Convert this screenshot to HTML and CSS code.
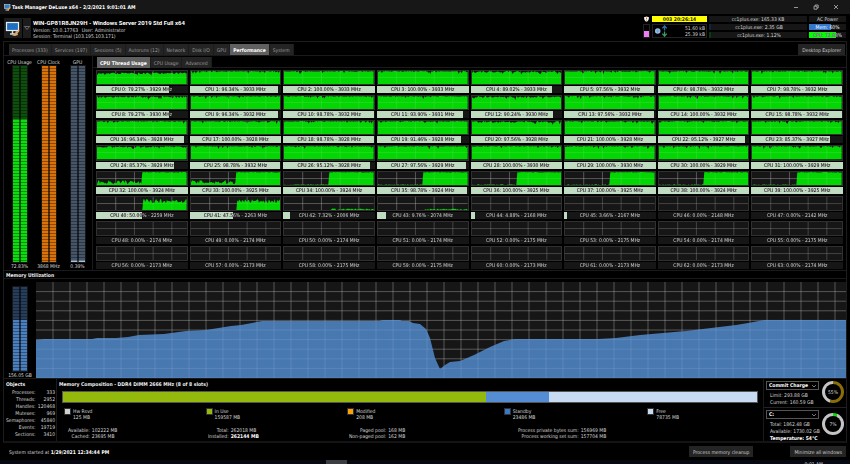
FILE: index.html
```
<!DOCTYPE html>
<html lang="en">
<head>
  <meta charset="UTF-8">
  <meta name="viewport" content="width=device-width, initial-scale=1.0">
  <title>Task Manager DeLuxe x64</title>
  <link rel="stylesheet" href="styles.css">
</head>
<body>
  <div class="titlebar">
    <svg class="app-icon" viewBox="0 0 14 14">
      <rect x="1" y="1" width="11" height="8" fill="#2f7fd0" stroke="#e8eef4"/>
      <path d="M3 12h7" stroke="#d8d8d8" stroke-width="2"/>
      <path d="M6 12L12 5l1 3-4 5z" fill="#e2a84c"/>
    </svg>
    <span class="app-title">Task Manager DeLuxe x64 - 2/2/2021 9:01:01 AM</span>
    <div class="window-buttons">
      <button aria-label="Minimize"><svg viewBox="0 0 6 6"><path d="M1 3.5h4"/></svg></button>
      <button aria-label="Restore"><svg viewBox="0 0 6 6"><path d="M1 2.2h3v3H1zM2.2 2V1h3v3H4.2"/></svg></button>
      <button aria-label="Close"><svg viewBox="0 0 6 6"><path d="M1 1l4 4M5 1L1 5"/></svg></button>
    </div>
  </div>

  <header class="header">
    <button class="computer" aria-label="Computer menu">
      <svg class="computer-icon" viewBox="0 0 18 18">
        <rect x="2.500" y="3" width="12" height="8" fill="#1f6fc0" stroke="#e6edf3" stroke-width="1.200"/>
        <path d="M6 14.500h5M8.500 11v3" stroke="#d5dde4" stroke-width="1.500"/>
        <path d="M8 16l3-2 1-3 1 1 2-2 .5 1.500-2 2.500.5 1.500-3 1z" fill="#e2a86a"/>
      </svg>
      <svg class="computer-arrow" viewBox="0 0 8 6"><path d="M1.500 1.500h5L4 4.500z" fill="none" stroke="#888" stroke-width=".7"/></svg>
    </button>
    <div class="host">
      <h1>WIN-GP81R8JN29H - Windows Server 2019 Std Full x64</h1>
      <p><span>Version: 10.0.17763</span> <span>User: Administrator</span></p>
      <p>Session: Terminal (103.195.103.171)</p>
    </div>
    <div class="status">
      <svg class="shield" viewBox="0 0 8 8">
        <path d="M4 0.500L7.300 1.500C7.300 5 6 6.800 4 7.700 2 6.800.7 5 .7 1.500z" fill="#f4f1ec"/>
        <path d="M4 2v2.500M4 5.300v.8" stroke="#c0571c" stroke-width="1.100"/>
      </svg>
      <span class="uptime">003 20:26:14</span>
      <span class="cell">cc1plus.exe: 165.33 KB</span>
      <span class="cell">AC Power</span>
      <span class="pink-meter"></span>
      <div class="network">
        <svg viewBox="0 0 18 14">
          <circle cx="4" cy="7" r="3.200" fill="#9fc4ee"/>
          <path d="M1.500 7h5M4 4v6" stroke="#4d7fb8" stroke-width=".6"/>
          <path d="M12 6.500V2M9.500 4L12 1l2.500 3" stroke="#2f6fa8" stroke-width="1.500" fill="none"/>
          <path d="M12 7.500V12M9.500 10l2.500 3 2.500-3" stroke="#3c9a62" stroke-width="1.500" fill="none"/>
        </svg>
        <div class="rates"><span>51.60 kB</span><span>25.39 kB</span></div>
      </div>
      <span class="cell cell-blue">cc1plus.exe: 2.35 GB</span>
      <span class="cell meter mem"><span>Mem: 60%</span></span>
      <span class="cell cell-green">cc1plus.exe: 1.12%</span>
      <span class="cell meter cpu"><span>CPU: 72.83%</span></span>
    </div>
  </header>

  <main class="panel">
    <div class="tab-row">
      <nav class="tabs">
        <button>Processes (333)</button>
        <button>Services (197)</button>
        <button>Sessions (5)</button>
        <button>Autoruns (12)</button>
        <button>Network</button>
        <button>Disk I/O</button>
        <button>GPU</button>
        <button class="active">Performance</button>
        <button>System</button>
      </nav>
      <button class="button">Desktop Explorer</button>
    </div>

    <section class="performance">
      <div class="gauges">
        <div class="gauge"><span>CPU Usage</span><div class="bars green"></div><span>72.83%</span></div>
        <div class="gauge"><span>CPU Clock</span><div class="bars orange"></div><span>3868 MHz</span></div>
        <div class="gauge"><span>GPU</span><div class="bars slate"></div><span>0.39%</span></div>
      </div>
      <div class="threads">
        <nav class="tabs subtabs">
          <button class="active">CPU Thread Usage</button>
          <button>CPU Usage</button>
          <button>Advanced</button>
        </nav>
        <div class="thread-grid" id="threads"></div>
      </div>
    </section>

    <section class="memory">
      <h2>Memory Utilization</h2>
      <div class="memory-body">
        <div class="gauge"><div class="bars blue"></div><span>156.05 GB</span></div>
        <svg class="memory-chart" id="memory" viewBox="0 0 810 96" preserveAspectRatio="none"></svg>
      </div>
    </section>

    <section class="details">
      <div class="objects">
        <h2>Objects</h2>
        <table>
          <tr><th>Processes:</th><td>333</td></tr>
          <tr><th>Threads:</th><td>2952</td></tr>
          <tr><th>Handles:</th><td>120468</td></tr>
          <tr><th>Mutexes:</th><td>969</td></tr>
          <tr><th>Semaphores:</th><td>45840</td></tr>
          <tr><th>Events:</th><td>19719</td></tr>
          <tr><th>Sections:</th><td>3410</td></tr>
        </table>
      </div>

      <div class="composition">
        <h2>Memory Composition - DDR4 DIMM 2666 MHz (8 of 8 slots)</h2>
        <div class="composition-bar"><span class="in-use"></span><span class="standby"></span><span class="free"></span></div>
        <div class="legend">
          <div class="reserved"><i></i><p>Hw Rsvd<br>125 MB</p></div>
          <div class="in-use"><i></i><p>In Use<br>159587 MB</p></div>
          <div class="modified"><i></i><p>Modified<br>208 MB</p></div>
          <div class="standby"><i></i><p>Standby<br>23486 MB</p></div>
          <div class="free"><i></i><p>Free<br>78735 MB</p></div>
        </div>
        <div class="stats">
          <dl><dt>Available:</dt><dd>102222 MB</dd><dt>Cached:</dt><dd>23695 MB</dd></dl>
          <dl><dt>Total:</dt><dd>262018 MB</dd><dt>Installed:</dt><dd><b>262144 MB</b></dd></dl>
          <dl><dt>Paged pool:</dt><dd>168 MB</dd><dt>Non-paged pool:</dt><dd>162 MB</dd></dl>
          <dl><dt>Process private bytes sum:</dt><dd>156969 MB</dd><dt>Process working set sum:</dt><dd>157704 MB</dd></dl>
        </div>
      </div>

      <div class="side">
        <div class="side-box">
          <div>
            <select aria-label="Memory counter"><option>Commit Charge</option></select>
            <p>Limit: 293.88 GB</p>
            <p>Current: 160.59 GB</p>
          </div>
          <div class="ring commit"><span>55%</span></div>
        </div>
        <div class="side-box">
          <div>
            <select aria-label="Drive"><option>C:</option></select>
            <p>Total: 1862.48 GB</p>
            <p>Available: 1730.02 GB</p>
            <p><b>Temperature: 54°C</b></p>
          </div>
          <div class="ring disk"><span>7%</span></div>
        </div>
      </div>
    </section>
  </main>

  <footer class="footer">
    <p>System started at <b>1/29/2021 12:34:44 PM</b></p>
    <button class="button cleanup">Process memory cleanup</button>
    <button class="button">Minimize all windows</button>
  </footer>
  <div class="taskbar"><span class="task"></span><span class="clock">9:01 AM</span></div>

  <script src="script.js"></script>
</body>
</html>
```
FILE: styles.css
```
* {
  box-sizing: border-box;
}
body {
  margin: 0;
  min-height: 100vh;
  display: flex;
  flex-direction: column;
  background: #000;
  color: #d6d6d6;
  font-family: "DejaVu Sans Condensed", "DejaVu Sans", Tahoma, sans-serif;
  font-size: 5px;
  line-height: 6px;
  white-space: nowrap;
  overflow: hidden;
}
h1, h2, p, dl, dd {
  margin: 0;
}
h1 {
  font-family: Roboto, sans-serif;
  font-size: 6px;
  line-height: 8px;
  color: #fff;
}
h2 {
  font-size: 5px;
  line-height: 8px;
  color: #eee;
}
b {
  color: #fff;
}
button, select {
  font: inherit;
  color: inherit;
  border: none;
  padding: 0;
  background: none;
}

/* title bar */
.titlebar {
  display: flex;
  align-items: center;
  height: 14px;
  padding: 0 4px;
  background: #171717;
}
.app-icon {
  width: 7px;
  height: 7px;
}
.app-title {
  flex: 1;
  margin-left: 1px;
  color: #fff;
  font-weight: bold;
}
.window-buttons {
  display: flex;
}
.window-buttons button {
  width: 20px;
  height: 14px;
}
.window-buttons svg {
  width: 6px;
  height: 6px;
  fill: none;
  stroke: #ccc;
  stroke-width: .7;
}

/* header */
.header {
  display: flex;
  align-items: flex-start;
  height: 27px;
  padding: 2px 4px 0;
}
.computer {
  display: flex;
  align-items: center;
  width: 27px;
  height: 20px;
  margin-top: 2px;
  background: #1c1c1c;
}
.computer-icon {
  width: 19px;
  height: 19px;
  border-right: 1px solid #000;
}
.computer-arrow {
  width: 8px;
  height: 6px;
}
.host {
  flex: 1;
  margin: 3px 0 0 2px;
}
.host span {
  margin-right: 2px;
}
.status {
  display: grid;
  grid-template-columns: 7px 55px 98px 37px;
  grid-template-rows: repeat(3, 6px);
  gap: 2px;
  text-align: center;
}
.shield {
  width: 7px;
  height: 6px;
}
.uptime {
  background: #ff0;
  color: #222;
  font-weight: bold;
}
.cell {
  background: #161616;
}
.cell-blue {
  border-left: 2px solid #12233d;
}
.cell-green {
  border-left: 2px solid #063d06;
}
.pink-meter {
  grid-row: 2 / 4;
  border: 1px solid #222;
  background: linear-gradient(#000 50%, #f07cf5 50%);
}
.network {
  grid-row: 2 / 4;
  display: flex;
  justify-content: space-between;
  border: 1px solid #222;
}
.network svg {
  width: 18px;
  height: 12px;
}
.rates {
  display: grid;
  padding-right: 1px;
}
.mem {
  color: #fff;
  background: linear-gradient(90deg, #3478cc 60%, #161616 60%);
}
.cpu {
  background: linear-gradient(90deg, #0f0 73%, #161616 73%);
}
.meter {
  isolation: isolate;
}
.cpu span {
  display: block;
  color: #fff;
  mix-blend-mode: difference;
}

/* main panel */
.panel {
  margin: 0 3px;
  border: 1px solid #1d1d1d;
  border-bottom: 2px solid #141414;
}
.tab-row {
  display: flex;
  justify-content: space-between;
  height: 14px;
  padding: 2px 1px 0 5px;
  border-bottom: 1px solid #1a1a1a;
}
.tabs {
  display: flex;
  color: #999;
}
.tabs button {
  height: 11px;
  padding: 0 3px;
  background: #242424;
  border-right: 1px solid #1c1c1c;
}
.tabs .active {
  background: #606060;
  color: #fff;
  font-weight: bold;
}
.button {
  height: 11px;
  padding: 0 4px;
  background: #242424;
  color: #ccc;
}

.performance {
  display: flex;
  height: 214px;
}
.gauges {
  display: flex;
  padding: 3px 0 1px 1px;
  border-right: 1px solid #1a1a1a;
}
.gauge {
  display: flex;
  flex-direction: column;
  align-items: center;
  width: 29px;
}
.bars {
  flex: 1;
  width: 16px;
  border: 1px solid #161616;
  background: linear-gradient(90deg, transparent 46%, rgba(0, 0, 0, .6) 46%, rgba(0, 0, 0, .6) 54%, transparent 54%),
    repeating-linear-gradient(transparent 0 2px, rgba(0, 0, 0, .35) 2px 3px),
    var(--level);
}
.green {
  --level: linear-gradient(#0c500c 27%, #0bdf0b 27%);
}
.orange {
  --level: linear-gradient(#d87209, #d87209);
}
.slate {
  --level: linear-gradient(#46566a 99%, #a5c0dc 99%);
}
.blue {
  --level: linear-gradient(#263d5c 39%, #4a7fc0 39%);
}
.threads {
  flex: 1;
}
.subtabs {
  height: 12px;
  padding: 1px 4px 0;
  border-bottom: 1px solid #1a1a1a;
}
.thread-grid {
  display: grid;
  grid-template-columns: repeat(8, minmax(0, 1fr));
  grid-template-rows: repeat(8, minmax(0, 1fr));
  gap: 2px;
  height: 201px;
  padding: 2px 3px 0;
}
.thread {
  display: flex;
  flex-direction: column;
  gap: 1px;
  min-height: 0;
}
.thread svg {
  flex: 1;
  width: 100%;
  min-height: 0;
  background: #161616;
  border: 1px solid #303030;
}
.load {
  fill: #04d604;
}
.grid-line {
  fill: none;
  stroke: #8a8a8a;
  stroke-opacity: .4;
}
.load + .grid-line {
  stroke: #fff;
  stroke-opacity: .1;
}
.thread-label {
  position: relative;
  height: 7px;
  line-height: 7px;
  text-align: center;
  background: #161616;
  isolation: isolate;
}
.thread-fill {
  position: absolute;
  inset: 0 auto 0 0;
  background: #c0dcc0;
}
.thread-text {
  position: relative;
  display: block;
  color: #e2e2e2;
  mix-blend-mode: difference;
}

/* memory */
.memory h2 {
  height: 9px;
  padding-left: 2px;
  border-top: 1px solid #1a1a1a;
  border-bottom: 1px solid #1a1a1a;
}
.memory-body {
  display: flex;
  height: 100px;
  padding-top: 3px;
  border-bottom: 1px solid #1a1a1a;
}
.memory-body .gauge {
  width: 32px;
  padding-top: 4px;
}
.memory-chart {
  flex: 1;
  min-width: 0;
  height: 96px;
  background: #161616;
}
.memory-area {
  fill: #4878b0;
}

/* details */
.details {
  display: flex;
  height: 62px;
}
.objects {
  width: 53px;
  padding: 1px 1px 0 2px;
  border-right: 1px solid #1a1a1a;
}
.objects table {
  width: 100%;
  border-collapse: collapse;
  text-align: right;
}
.objects th, .objects td {
  height: 7px;
  padding: 0;
  font-weight: normal;
}
.objects th {
  width: 28px;
}
.composition {
  flex: 1;
  padding: 1px 5px 0;
}
.composition h2 {
  margin: 0 0 3px -3px;
}
.composition-bar {
  display: flex;
  height: 12px;
  border: 1px solid #555;
}
.composition-bar .in-use {
  flex: 424;
  background: #92b90b;
}
.composition-bar .standby {
  flex: 63;
  background: #558dd5;
}
.composition-bar .free {
  flex: 209;
  background: #c8d9f2;
}
.legend {
  display: grid;
  grid-template-columns: 142fr 142fr 157fr 144fr 111fr;
  padding: 5px 0 0 2px;
}
.legend div {
  display: flex;
  gap: 2px;
}
.legend i {
  width: 7px;
  height: 7px;
  border: 1px solid #333;
  background: #d0d0d0;
}
.legend .in-use i {
  background: #92b90b;
}
.legend .modified i {
  background: #ff9d0a;
}
.legend .standby i {
  background: #3a78c8;
}
.legend .free i {
  background: #c8d9f2;
}
.stats {
  display: grid;
  grid-template-columns: 140fr 141fr 169fr 240fr;
  padding: 7px 0 0 6px;
}
.stats dl {
  display: grid;
  grid-template-columns: auto auto;
  justify-content: start;
  column-gap: 2px;
}
.stats dt {
  text-align: right;
}
.side {
  width: 83px;
  border-left: 1px solid #1a1a1a;
}
.side-box {
  display: flex;
  justify-content: space-between;
  padding: 2px 2px 1px;
  line-height: 7px;
}
.side-box + .side-box {
  border-top: 1px solid #222;
}
.side-box p {
  padding-left: 4px;
}
.side-box select {
  display: block;
  appearance: none;
  width: 53px;
  height: 9px;
  margin-bottom: 2px;
  padding-left: 2px;
  border: 1px solid #555;
  border-radius: 0;
  color: #fff;
  font-weight: bold;
  background: url("data:image/svg+xml,%3Csvg xmlns='http://www.w3.org/2000/svg' viewBox='0 0 6 4'%3E%3Cpath d='M1 1l2 2 2-2' fill='none' stroke='%23aaa' stroke-width='.7'/%3E%3C/svg%3E") right 1px center / 6px 4px no-repeat;
}
.ring {
  display: grid;
  place-items: center;
  width: 22px;
  height: 22px;
  border-radius: 50%;
}
.ring span {
  display: grid;
  place-items: center;
  width: 16px;
  height: 16px;
  border-radius: 50%;
  background: #000;
}
.commit {
  background: conic-gradient(#8a6d08 55%, #c4c4c4 55%);
}
.disk {
  margin-top: 3px;
  background: conic-gradient(#0be00b 7%, #c4c4c4 7%);
}

/* footer */
.footer {
  display: flex;
  align-items: center;
  height: 17px;
  padding: 0 4px 0 9px;
}
.footer p {
  flex: 1;
}
.cleanup {
  margin-right: 37px;
}
.taskbar {
  display: flex;
  justify-content: space-between;
  flex: 1;
  height: 4px;
  padding: 0 27px 0 326px;
  background: #060912;
  overflow: hidden;
}
.task {
  width: 21px;
  background: #3a3d42;
}
.clock {
  padding-top: 1px;
}
```
FILE: script.js
```
// usage % and clock MHz of every thread
const usage = [
  79.27, 96.34, 100, 100, 89.02, 97.56, 98.78, 98.78,
  79.27, 96.34, 98.78, 93.90, 90.24, 97.56, 100, 98.78,
  96.34, 100, 98.78, 91.46, 97.56, 100, 95.12, 85.37,
  85.37, 98.78, 95.12, 97.56, 100, 100, 100, 100,
  100, 100, 100, 98.78, 100, 100, 100, 100,
  50, 47.56, 7.32, 9.76, 4.88, 3.66, 0, 0,
  0, 0, 0, 0, 0, 0, 0, 0,
  0, 0, 0, 0, 0, 0, 0, 0
];
const clock = [
  3929, 3933, 3933, 3933, 3933, 3932, 3932, 3932,
  3930, 3932, 3932, 3931, 3930, 3932, 3932, 3932,
  3928, 3928, 3928, 3928, 3928, 3928, 3927, 3927,
  3929, 3932, 3928, 3929, 3930, 3930, 3929, 3929,
  3924, 3925, 3924, 3924, 3925, 3925, 3924, 3925,
  2259, 2263, 2006, 2074, 2168, 2167, 2148, 2142,
  2174, 2174, 2174, 2174, 2175, 2175, 2174, 2175,
  2173, 2173, 2175, 2175, 2173, 2173, 2173, 2174
];

let seed = 7;
function random() {
  seed = (seed * 16807) % 2147483647;
  return seed / 2147483647;
}

function gridLines(width, height, stepX, stepY) {
  let d = '';
  for (let x = stepX; x < width; x += stepX) d += 'M' + x + ' 0V' + height;
  for (let y = stepY; y < height; y += stepY) d += 'M0 ' + y + 'H' + width;
  return '<path class="grid-line" vector-effect="non-scaling-stroke" d="' + d + '"/>';
}

// height of the load curve (0 to 15) at column x
function loadAt(i, x) {
  const row = Math.floor(i / 8);
  const noisy = [0, 4, 8, 12, 20, 24].includes(i);
  if (row < 4) {
    const dip = random() < 0.1 ? random() * 3 : 0;
    return 15 - (i === 0 ? 1.5 : 0) - random() * (noisy ? 2 : 0.8) - dip;
  }
  if (row === 4) {
    if (x > 45) return 15 - random() * 0.6;
    return i < 34 ? 1 + random() * 5 : random();
  }
  if (i < 42) return x > 46 ? 8 + random() * 5 : 0;
  if (i < 44) return x > 46 ? random() * 2 : 0;
  return 0;
}

function drawThread(i) {
  let area = 'M0 15';
  for (let x = 0; x <= 91; x++) area += 'L' + x + ' ' + (15 - loadAt(i, x)).toFixed(1);
  area += 'L91 15z';
  const load = i < 44 ? '<path class="load" d="' + area + '"/>' : '';
  const lines = gridLines(91, 15, 19, 7.5);
  return '<div class="thread">' +
    '<svg viewBox="0 0 91 15" preserveAspectRatio="none">' + (load ? lines : '') + load + lines + '</svg>' +
    '<div class="thread-label"><span class="thread-fill" style="width:' + usage[i] + '%"></span>' +
    '<span class="thread-text">CPU ' + i + ': ' + usage[i].toFixed(2) + '% - ' + clock[i] + ' MHz</span></div></div>';
}

document.getElementById('threads').innerHTML = usage.map((value, i) => drawThread(i)).join('');

const memory = [
  [0, 58], [8, 57], [56, 57], [61, 56], [80, 56], [92, 55], [103, 53], [128, 52], [150, 49], [170, 48],
  [195, 44], [205, 43], [226, 39], [343, 39], [347, 38], [364, 38], [366, 39], [373, 39], [377, 41],
  [384, 42], [390, 47], [394, 56], [399, 76], [404, 87], [409, 83], [414, 80], [424, 79], [438, 73],
  [454, 65], [468, 59], [479, 57], [562, 57], [580, 56], [604, 53], [650, 49], [700, 43], [712, 41], [728, 38], [810, 38]
];
document.getElementById('memory').innerHTML = gridLines(810, 96, 17, 9.6) +
  '<polygon class="load memory-area" points="0,96 ' + memory.join(' ') + ' 810,96"/>' +
  gridLines(810, 96, 17, 9.6);
```
